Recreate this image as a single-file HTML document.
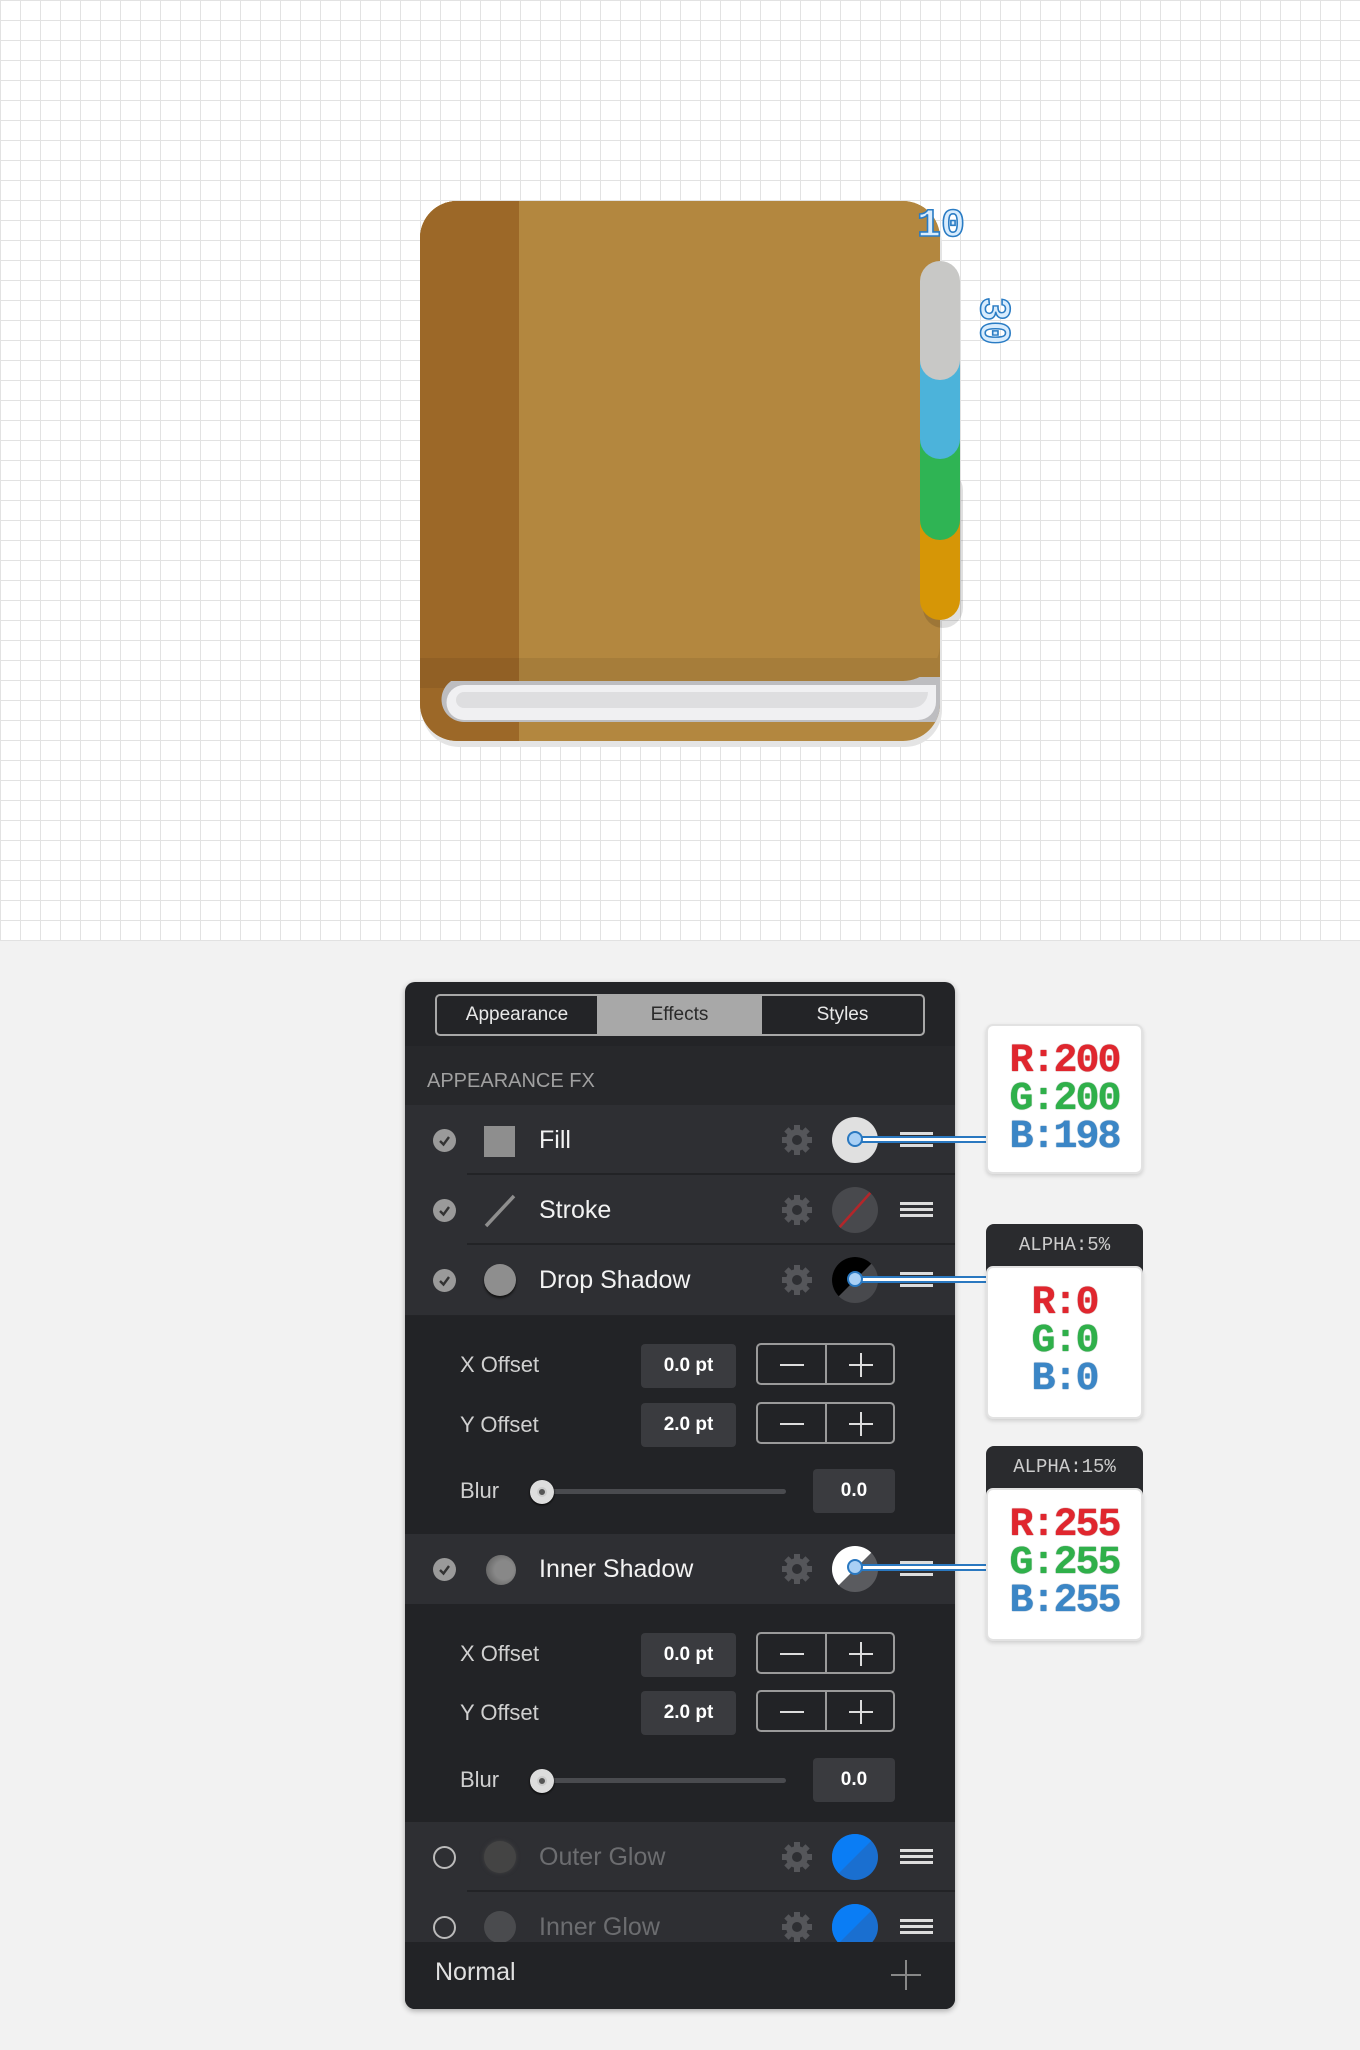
<!DOCTYPE html>
<html><head><meta charset="utf-8"><style>
*{margin:0;padding:0;box-sizing:border-box}
body{width:1360px;height:2050px;position:relative;overflow:hidden;background:#f2f2f2;font-family:"Liberation Sans",sans-serif}
.a{position:absolute}
#grid{left:0;top:0;width:1360px;height:941px;background-color:#fff;
background-image:linear-gradient(to right,#e2e2e2 1px,transparent 1px),linear-gradient(to bottom,#e2e2e2 1px,transparent 1px);
background-size:20px 20px}
.panel{left:405px;top:982px;width:550px;height:1027px;background:#232427;border-radius:10px;overflow:hidden;box-shadow:0 2px 6px rgba(0,0,0,.3)}
.row{position:absolute;left:0;width:550px;height:70px;background:#2e2f33}
.row .sep{position:absolute;left:62px;right:0;bottom:0;height:2px;background:#222326}
.lbl{position:absolute;left:134px;font-size:25px;color:#f2f2f2;line-height:70px;top:0}
.chk{position:absolute;left:28px;top:24px;width:23px;height:23px;border-radius:50%;background:#9a9a9a}
.chk svg{position:absolute;left:0;top:0}
.gear{position:absolute;left:375px;top:18px}
.sw{position:absolute;left:427px;top:12px;width:46px;height:46px;border-radius:50%;overflow:hidden}
.ham{position:absolute;left:495px;top:27px;width:33px;height:15px;border-top:3px solid #ddd;border-bottom:3px solid #ddd}
.ham:after{content:"";position:absolute;left:0;right:0;top:3px;height:3px;background:#ddd}
.sub{position:absolute;color:#d0d0d0;font-size:22px}
.fld{position:absolute;width:95px;height:44px;background:#3a3b3f;border-radius:4px;color:#fff;font-weight:bold;font-size:19px;text-align:center;line-height:44px}
.pm{position:absolute;width:139px;height:42px;border:2px solid #9a9a9a;border-radius:5px}
.pm:before{content:"";position:absolute;left:67px;top:0;bottom:0;width:2px;background:#9a9a9a}
.pm i{position:absolute;top:19px;height:2px;width:24px;background:#ddd}
.pm b{position:absolute;left:102px;top:8px;width:2px;height:24px;background:#ddd}
.trk{position:absolute;height:5px;background:#4a4b4f;border-radius:3px;width:245px}
.knob{position:absolute;width:24px;height:24px;border-radius:50%;background:#ddd;box-shadow:0 1px 2px #000}
.knob:after{content:"";position:absolute;left:7px;top:7px;width:10px;height:10px;border-radius:50%;background:#555;border:2px solid #ccc;box-sizing:border-box}
.val{position:absolute;width:82px;height:44px;background:#3a3b3f;border-radius:4px;color:#fff;font-weight:bold;font-size:19px;text-align:center;line-height:44px}
.box{position:absolute;left:986px;width:157px;background:#fff;border:2px solid #e2e2e2;border-radius:7px;box-shadow:0 2px 4px rgba(0,0,0,.15);text-align:center;font-family:"Liberation Mono",monospace;font-weight:bold;font-size:40px;line-height:38px;letter-spacing:-2px}
.r{color:#e0262e;text-shadow:0 0 1px #8a0d10,0 1px 0 #fff}
.g{color:#2fb04a;text-shadow:0 0 1px #116626}
.b{color:#3b86c6;text-shadow:0 0 1px #114a80}
.hd{position:absolute;left:986px;width:157px;height:50px;background:#2a2b2e;border-radius:8px 8px 0 0;color:#ccc;font-family:"Liberation Mono",monospace;font-size:19px;text-align:center;line-height:42px}
.con{position:absolute;left:854px;width:132px;height:7px;border-top:2px solid #2a78c0;border-bottom:2px solid #2a78c0;background:#fff}
.dot{position:absolute;width:16px;height:16px;border-radius:50%;background:#a9d0f5;border:2px solid #2a78c0}
</style></head><body>
<div id="grid" class="a"></div>

<!-- book -->
<svg class="a" style="left:400px;top:180px" width="650" height="600" viewBox="0 0 650 600">
 <defs><clipPath id="bk"><rect x="20" y="21" width="520" height="540" rx="37"/></clipPath></defs>
 <rect x="22" y="27" width="520" height="540" rx="37" fill="#e4e4e4"/>
 <g clip-path="url(#bk)">
  <rect x="20" y="21" width="520" height="540" fill="#b3873f"/>
  <rect x="20" y="21" width="99" height="540" fill="#9c6828"/>
  <rect x="20" y="478" width="520" height="30" fill="#000" opacity=".07"/>
  <path d="M64 497 H540 V542 H64 a22.5 22.5 0 0 1 0 -45z" fill="#bdbdc0"/>
  <path d="M64 505 H536 V522 a18 18 0 0 1 -18 18 H64 a17.5 17.5 0 0 1 0 -35z" fill="#f0f0f2"/>
  <path d="M64 512 H528 a16 16 0 0 1 -16 16 H64 a8 8 0 0 1 0 -16z" fill="#dedee0"/>
  <path d="M20 21 H503 a37 37 0 0 1 37 37 V464 a37 37 0 0 1 -37 37 H20z" fill="#b3873f"/>
  <path d="M20 21 H119 V501 H20z" fill="#9c6828"/>
  <path d="M20 478 H540 V464 a37 37 0 0 1 -37 37 H20z" fill="#000" opacity=".07"/>
 </g>
 <rect x="523" y="290" width="40" height="158" rx="20" fill="#000" opacity=".12"/>
 <rect x="520" y="280" width="40" height="160" rx="20" fill="#d69606"/>
 <rect x="520" y="205" width="40" height="155" rx="20" fill="#2fb454"/>
 <rect x="520" y="125" width="40" height="154" rx="20" fill="#4cb3da"/>
 <rect x="520" y="81" width="40" height="119" rx="20" fill="#c8c8c6"/>
 <text x="517" y="56" font-family="Liberation Mono,monospace" font-weight="bold" font-size="40" fill="#d8ecfd" stroke="#2a7cc4" stroke-width="1.6" textLength="48" lengthAdjust="spacingAndGlyphs">10</text>
 <text transform="translate(581 117) rotate(90)" font-family="Liberation Mono,monospace" font-weight="bold" font-size="44" fill="#d8ecfd" stroke="#2a7cc4" stroke-width="1.6" textLength="48" lengthAdjust="spacingAndGlyphs">30</text>
</svg>

<div class="panel a">
 <div class="a" style="left:30px;top:12px;width:490px;height:42px;border:2px solid #a8a8a8;border-radius:5px;overflow:hidden;font-size:19px;color:#e8e8e8">
  <div class="a" style="left:0;top:0;width:160px;height:38px;text-align:center;line-height:38px">Appearance</div>
  <div class="a" style="left:160px;top:0;width:165px;height:38px;background:#a8a8a8;color:#2a2a2a;text-align:center;line-height:38px">Effects</div>
  <div class="a" style="left:325px;top:0;width:161px;height:38px;text-align:center;line-height:38px">Styles</div>
 </div>
 <div class="a" style="left:0;top:64px;width:550px;height:59px;background:#27282b"></div>
 <div class="a" style="left:22px;top:88px;font-size:20px;color:#a0a0a0">APPEARANCE FX</div>

 <div class="row" style="top:123px"><div class="chk"><svg width="23" height="23"><path d="M7 12 l3.5 3.5 L16 8" stroke="#333" stroke-width="2.4" fill="none"/></svg></div>
  <div class="a" style="left:79px;top:21px;width:31px;height:31px;background:#8e8e8e"></div>
  <div class="lbl">Fill</div><svg class="gear" width="34" height="34" viewBox="0 0 34 34"><g fill="#55565a"><circle cx="17" cy="17" r="11"/><g stroke="#55565a" stroke-width="6"><path d="M17 2v30M2 17h30M6.4 6.4l21.2 21.2M27.6 6.4L6.4 27.6"/></g></g><circle cx="17" cy="17" r="5" fill="#2e2f33"/></svg>
  <div class="ham"></div>
  <div class="sw" style="background:#e0e0e0"></div><div class="sep"></div></div>

 <div class="row" style="top:193px"><div class="chk"><svg width="23" height="23"><path d="M7 12 l3.5 3.5 L16 8" stroke="#333" stroke-width="2.4" fill="none"/></svg></div>
  <svg class="a" style="left:78px;top:18px" width="34" height="36"><path d="M3 33 L31 3" stroke="#8e8e8e" stroke-width="3.5"/></svg>
  <div class="lbl">Stroke</div><svg class="gear" width="34" height="34" viewBox="0 0 34 34"><g fill="#55565a"><circle cx="17" cy="17" r="11"/><g stroke="#55565a" stroke-width="6"><path d="M17 2v30M2 17h30M6.4 6.4l21.2 21.2M27.6 6.4L6.4 27.6"/></g></g><circle cx="17" cy="17" r="5" fill="#2e2f33"/></svg>
  <div class="sw" style="background:#48494d"><svg width="46" height="46"><path d="M6 42 L40 4" stroke="#b3262a" stroke-width="2.5"/></svg></div>
  <div class="ham"></div><div class="sep"></div></div>

 <div class="row" style="top:263px"><div class="chk"><svg width="23" height="23"><path d="M7 12 l3.5 3.5 L16 8" stroke="#333" stroke-width="2.4" fill="none"/></svg></div>
  <div class="a" style="left:79px;top:19px;width:32px;height:32px;border-radius:50%;background:#8e8e8e;box-shadow:0 2px 2px #111"></div>
  <div class="lbl">Drop Shadow</div><svg class="gear" width="34" height="34" viewBox="0 0 34 34"><g fill="#55565a"><circle cx="17" cy="17" r="11"/><g stroke="#55565a" stroke-width="6"><path d="M17 2v30M2 17h30M6.4 6.4l21.2 21.2M27.6 6.4L6.4 27.6"/></g></g><circle cx="17" cy="17" r="5" fill="#2e2f33"/></svg>
  <div class="ham"></div>
  <div class="sw" style="background:#48494d"><svg width="46" height="46"><path d="M0 0 H46 L0 46z" fill="#000"/></svg></div></div>

 <div class="a" style="left:0;top:334px;width:550px;height:218px;background:#222326"></div>
 <div class="sub" style="left:55px;top:370px">X Offset</div>
 <div class="fld" style="left:236px;top:362px">0.0 pt</div>
 <div class="pm" style="left:351px;top:361px"><i style="left:22px"></i><i style="left:91px"></i><b></b></div>
 <div class="sub" style="left:55px;top:430px">Y Offset</div>
 <div class="fld" style="left:236px;top:421px">2.0 pt</div>
 <div class="pm" style="left:351px;top:420px"><i style="left:22px"></i><i style="left:91px"></i><b></b></div>
 <div class="sub" style="left:55px;top:496px">Blur</div>
 <div class="trk" style="left:136px;top:507px"></div><div class="knob" style="left:125px;top:498px"></div>
 <div class="val" style="left:408px;top:487px">0.0</div>

 <div class="row" style="top:552px"><div class="chk"><svg width="23" height="23"><path d="M7 12 l3.5 3.5 L16 8" stroke="#333" stroke-width="2.4" fill="none"/></svg></div>
  <div class="a" style="left:81px;top:21px;width:30px;height:30px;border-radius:50%;background:radial-gradient(circle at 60% 50%,#888 40%,#555 100%)"></div>
  <div class="lbl">Inner Shadow</div><svg class="gear" width="34" height="34" viewBox="0 0 34 34"><g fill="#55565a"><circle cx="17" cy="17" r="11"/><g stroke="#55565a" stroke-width="6"><path d="M17 2v30M2 17h30M6.4 6.4l21.2 21.2M27.6 6.4L6.4 27.6"/></g></g><circle cx="17" cy="17" r="5" fill="#2e2f33"/></svg>
  <div class="ham"></div>
  <div class="sw" style="background:#5a5b5f"><svg width="46" height="46"><path d="M0 0 H46 L0 46z" fill="#fff"/></svg></div></div>

 <div class="a" style="left:0;top:622px;width:550px;height:218px;background:#222326"></div>
 <div class="sub" style="left:55px;top:659px">X Offset</div>
 <div class="fld" style="left:236px;top:651px">0.0 pt</div>
 <div class="pm" style="left:351px;top:650px"><i style="left:22px"></i><i style="left:91px"></i><b></b></div>
 <div class="sub" style="left:55px;top:718px">Y Offset</div>
 <div class="fld" style="left:236px;top:709px">2.0 pt</div>
 <div class="pm" style="left:351px;top:708px"><i style="left:22px"></i><i style="left:91px"></i><b></b></div>
 <div class="sub" style="left:55px;top:785px">Blur</div>
 <div class="trk" style="left:136px;top:796px"></div><div class="knob" style="left:125px;top:787px"></div>
 <div class="val" style="left:408px;top:776px">0.0</div>

 <div class="row" style="top:840px"><div class="chk" style="background:none;border:2px solid #bbb"></div>
  <div class="a" style="left:79px;top:19px;width:32px;height:32px;border-radius:50%;background:#444;box-shadow:0 0 4px #444"></div>
  <div class="lbl" style="color:#6c6d70">Outer Glow</div><svg class="gear" width="34" height="34" viewBox="0 0 34 34"><g fill="#55565a"><circle cx="17" cy="17" r="11"/><g stroke="#55565a" stroke-width="6"><path d="M17 2v30M2 17h30M6.4 6.4l21.2 21.2M27.6 6.4L6.4 27.6"/></g></g><circle cx="17" cy="17" r="5" fill="#2e2f33"/></svg>
  <div class="sw" style="background:#1a6fd0"><svg width="46" height="46"><path d="M0 0 H46 L0 46z" fill="#0a7df5"/></svg></div>
  <div class="ham"></div><div class="sep"></div></div>
 <div class="row" style="top:910px;height:50px;overflow:hidden"><div class="chk" style="background:none;border:2px solid #bbb"></div>
  <div class="a" style="left:79px;top:19px;width:32px;height:32px;border-radius:50%;background:#4a4b4e"></div>
  <div class="lbl" style="color:#6c6d70">Inner Glow</div><svg class="gear" width="34" height="34" viewBox="0 0 34 34"><g fill="#55565a"><circle cx="17" cy="17" r="11"/><g stroke="#55565a" stroke-width="6"><path d="M17 2v30M2 17h30M6.4 6.4l21.2 21.2M27.6 6.4L6.4 27.6"/></g></g><circle cx="17" cy="17" r="5" fill="#2e2f33"/></svg>
  <div class="sw" style="background:#1a6fd0"><svg width="46" height="46"><path d="M0 0 H46 L0 46z" fill="#0a7df5"/></svg></div>
  <div class="ham"></div></div>
 <div class="a" style="left:0;top:960px;width:550px;height:67px;background:#222326"></div>
 <div class="a" style="left:30px;top:976px;font-size:25px;color:#e0e0e0">Normal</div>
 <div class="a" style="left:500px;top:978px;width:2px;height:30px;background:#888"></div>
 <div class="a" style="left:486px;top:992px;width:30px;height:2px;background:#888"></div>
</div>

<div class="con" style="top:1136px"></div><div class="dot" style="left:847px;top:1131px"></div>
<div class="con" style="top:1276px"></div><div class="dot" style="left:847px;top:1271px"></div>
<div class="con" style="top:1564px"></div><div class="dot" style="left:847px;top:1559px"></div>

<div class="box" style="top:1024px;height:150px;padding-top:17px"><div class="r">R:200</div><div class="g">G:200</div><div class="b">B:198</div></div>
<div class="hd" style="top:1224px">ALPHA:5%</div>
<div class="box" style="top:1266px;height:153px;padding-top:17px"><div class="r">R:0</div><div class="g">G:0</div><div class="b">B:0</div></div>
<div class="hd" style="top:1446px">ALPHA:15%</div>
<div class="box" style="top:1488px;height:153px;padding-top:17px"><div class="r">R:255</div><div class="g">G:255</div><div class="b">B:255</div></div>
</body></html>
